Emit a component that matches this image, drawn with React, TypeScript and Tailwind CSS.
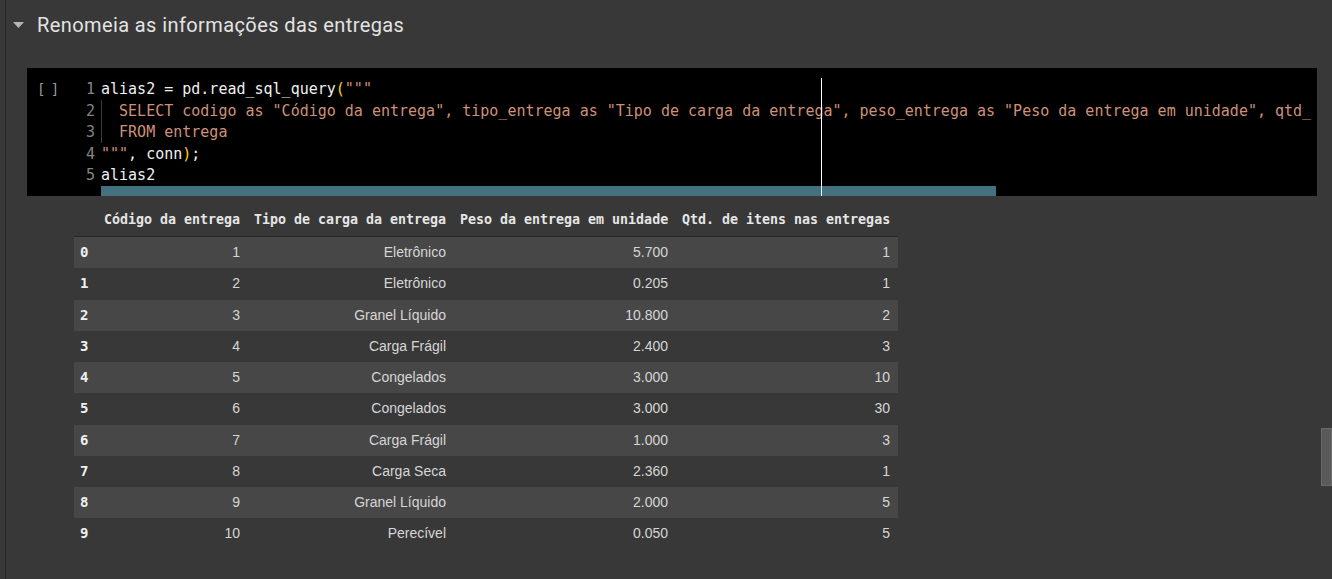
import React from "react";

const rows: [string, string, string, string, string][] = [
  ["0", "1", "Eletrônico", "5.700", "1"],
  ["1", "2", "Eletrônico", "0.205", "1"],
  ["2", "3", "Granel Líquido", "10.800", "2"],
  ["3", "4", "Carga Frágil", "2.400", "3"],
  ["4", "5", "Congelados", "3.000", "10"],
  ["5", "6", "Congelados", "3.000", "30"],
  ["6", "7", "Carga Frágil", "1.000", "3"],
  ["7", "8", "Carga Seca", "2.360", "1"],
  ["8", "9", "Granel Líquido", "2.000", "5"],
  ["9", "10", "Perecível", "0.050", "5"],
];

const mono = { fontFamily: '"DejaVu Sans Mono", "Liberation Mono", monospace' };

export default function App() {
  return (
    <div className="relative w-[1332px] h-[579px] overflow-hidden bg-[#383838] flex">
      <div className="w-[5px] shrink-0" />
      <div className="w-px shrink-0 bg-[#272727]" />
      <div className="flex-1 flex flex-col">
        {/* Heading */}
        <div className="h-[50px] flex items-center pl-[7px]">
          <svg width="11" height="6" viewBox="0 0 11 6" className="shrink-0">
            <path d="M0 0 L11 0 L5.5 6 Z" fill="#b5b5b5" />
          </svg>
          <span
            className="ml-[13px] text-[20px] tracking-[0.4px] text-[#e3e3e3]"
            style={{ fontFamily: 'Roboto, "Noto Sans", sans-serif' }}
          >
            Renomeia as informações das entregas
          </span>
        </div>

        {/* Code cell */}
        <div className="mt-[18px] ml-[21px] w-[1290px] h-[128px] bg-black flex">
          <div className="w-[74px] shrink-0 pt-[11px] flex" style={mono}>
            <div className="w-[50px] pl-[10px] text-[14px] tracking-[-1.5px] leading-[21.6px] text-[#9a9a9a] whitespace-pre">
              [ ]
            </div>
            <div className="w-[24px] pr-[6px] text-right text-[15px] leading-[21.6px] text-[#858585]">
              <div>1</div>
              <div>2</div>
              <div>3</div>
              <div>4</div>
              <div>5</div>
            </div>
          </div>
          <div
            className="relative flex-1 overflow-hidden pt-[11px] text-[15px] leading-[21.6px] whitespace-pre text-[#f0f0f0]"
            style={mono}
          >
            <div>
              alias2 = pd.read_sql_query<span className="text-[#ffd700]">(</span>
              <span className="text-[#ce9178]">"""</span>
            </div>
            <div className="text-[#ce9178]">
              {'  SELECT codigo as "Código da entrega", tipo_entrega as "Tipo de carga da entrega", peso_entrega as "Peso da entrega em unidade", qtd_'}
            </div>
            <div className="text-[#ce9178]">{"  FROM entrega"}</div>
            <div>
              <span className="text-[#ce9178]">"""</span>, conn
              <span className="text-[#ffd700]">)</span>;
            </div>
            <div>alias2</div>
            <div className="absolute left-0 top-[32px] h-[43px] w-px bg-[#3c3c3c]" />
            <div className="absolute left-0 bottom-0 w-[895px] h-[10px] bg-[#44717f]" />
            <div className="absolute left-[720px] top-[10px] bottom-0 w-px bg-white" />
          </div>
        </div>

        {/* Table */}
        <div className="mt-[5px] ml-[68px] w-[824px]">
          <div
            className="grid grid-cols-[24px_150px_206px_222px_222px] h-[36px] items-center pt-[2px] border-b border-[#262626] text-[13.3px] font-bold text-[#e6e6e6]"
            style={mono}
          >
            <div />
            <div className="pl-[6px] pr-[8px] text-right whitespace-nowrap">Código da entrega</div>
            <div className="pl-[6px] pr-[8px] text-right whitespace-nowrap">Tipo de carga da entrega</div>
            <div className="pl-[6px] pr-[8px] text-right whitespace-nowrap">Peso da entrega em unidade</div>
            <div className="pl-[6px] pr-[8px] text-right whitespace-nowrap">Qtd. de itens nas entregas</div>
          </div>
          {rows.map((r, i) => (
            <div
              key={i}
              className={
                "grid grid-cols-[24px_150px_206px_222px_222px] h-[31.25px] items-center " +
                (i % 2 === 0 ? "bg-[#474747]" : "bg-[#383838]")
              }
            >
              <div className="pl-[6px] text-[14px] font-bold text-[#f0f0f0]" style={mono}>
                {r[0]}
              </div>
              {r.slice(1).map((c, j) => (
                <div
                  key={j}
                  className="pl-[6px] pr-[8px] text-right text-[14px] text-[#d6d6d6] whitespace-nowrap"
                  style={{ fontFamily: '"Liberation Sans", Arial, sans-serif' }}
                >
                  {c}
                </div>
              ))}
            </div>
          ))}
        </div>
      </div>

      {/* right scrollbar thumb */}
      <div className="absolute right-0 top-[428px] w-[11px] h-[58px] bg-[#5a5a5a] border border-[#6b6b6b]" />
    </div>
  );
}
